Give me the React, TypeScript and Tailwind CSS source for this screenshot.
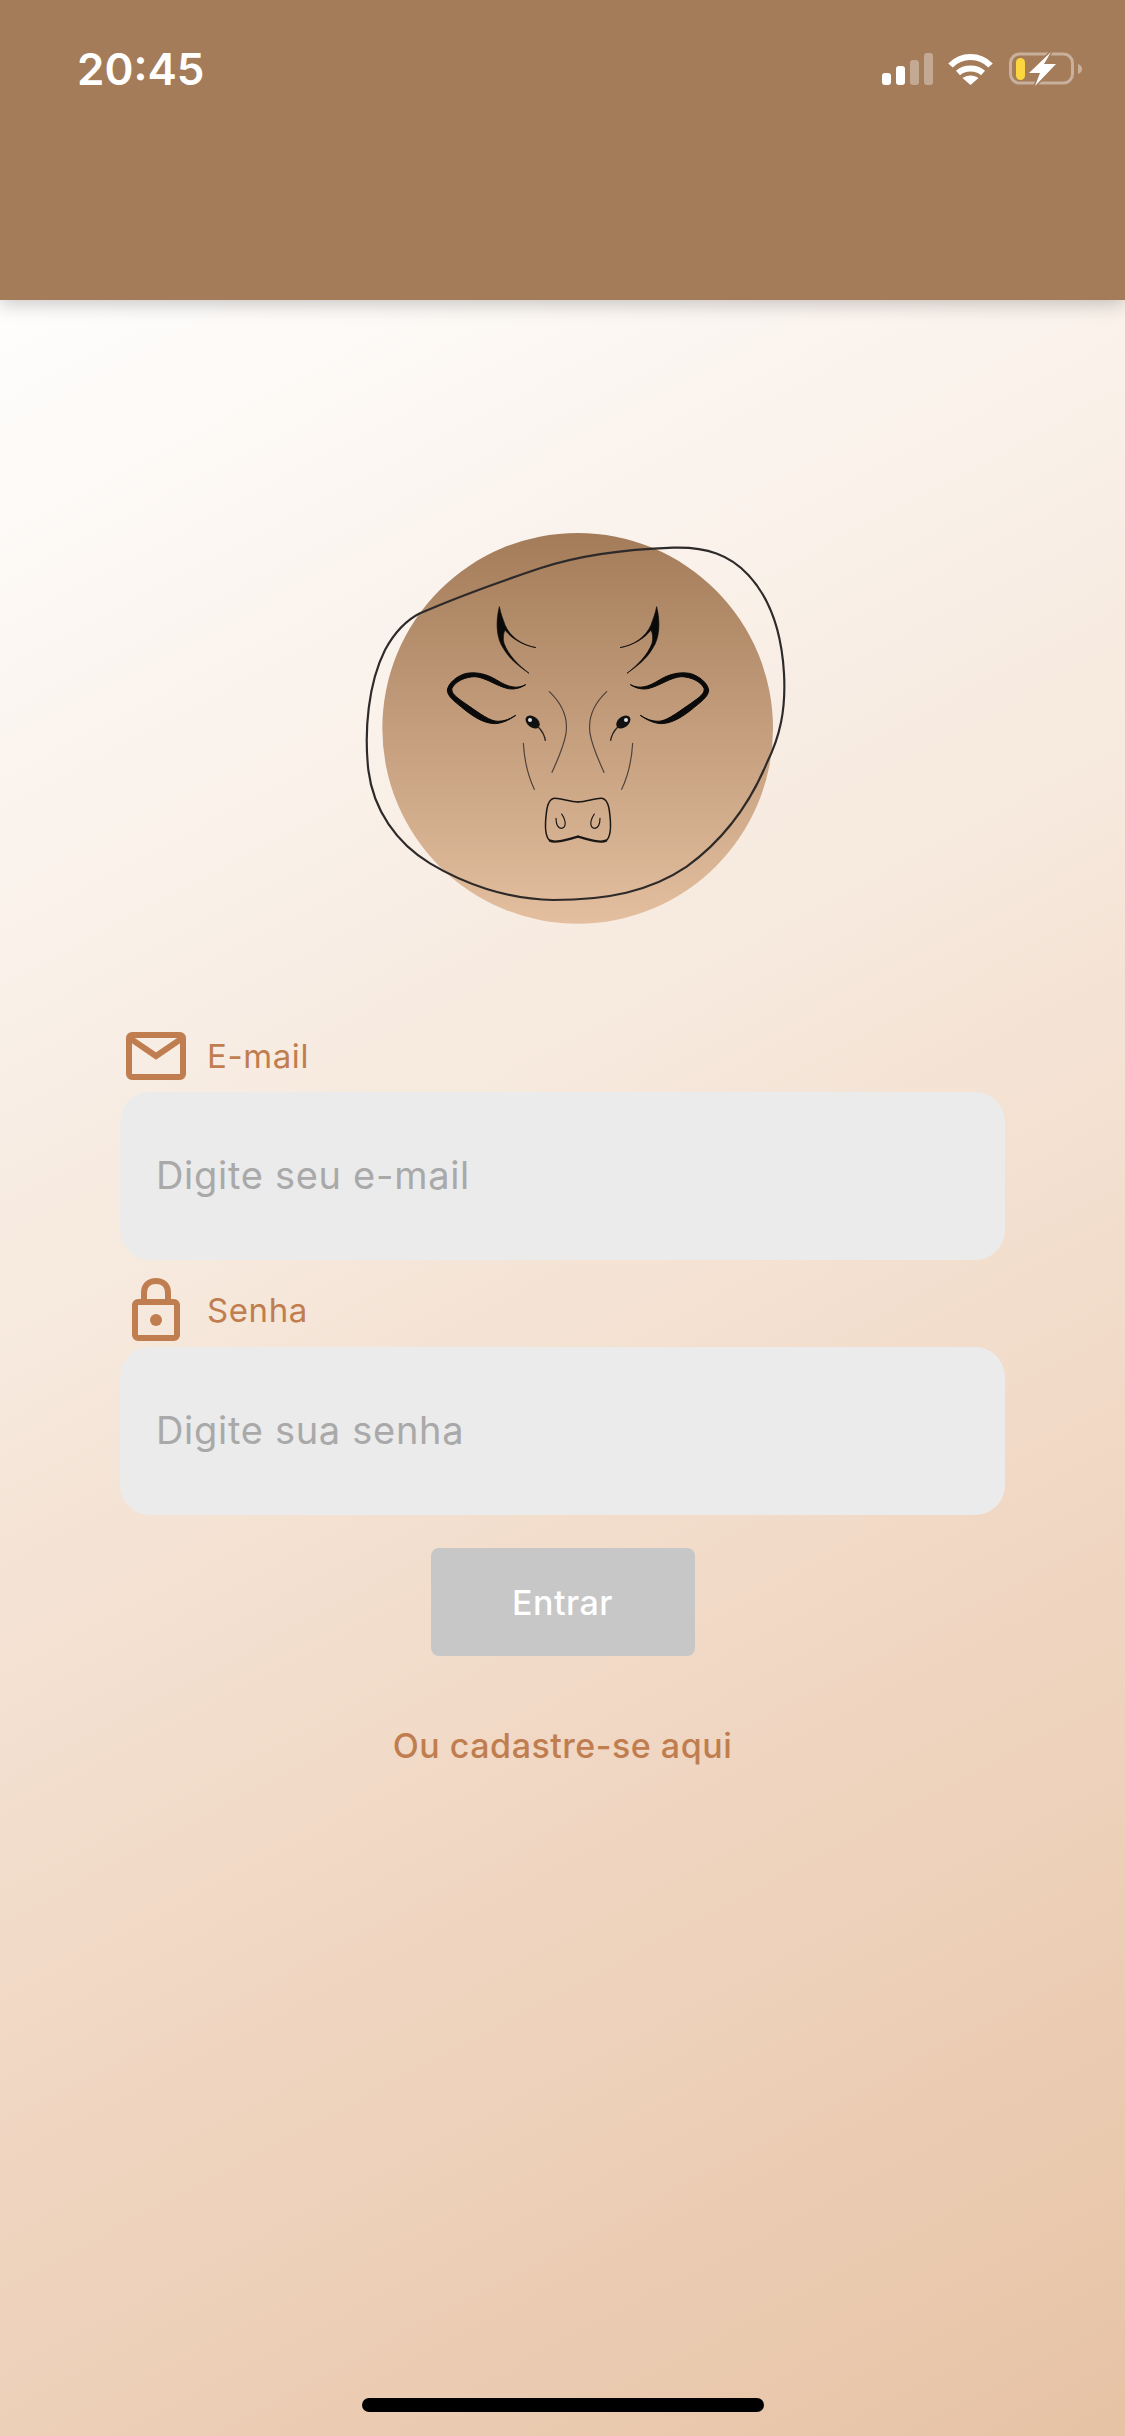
const inter = { fontFamily: 'Inter, "Noto Sans", sans-serif' };

const CowHalf = () => (
  <g>
    {/* horn */}
    <path
      fill="#0a0a0a"
      stroke="#0a0a0a"
      strokeWidth="2"
      strokeLinejoin="round"
      d="M478 290C466 340 470 385 490 415C510 450 540 470 567 490C535 465 505 435 492 400C488 385 490 370 495 360C515 385 545 405 588 413C545 405 510 380 495 345C488 325 482 310 478 290Z"
    />
    {/* ear */}
    <path
      fill="#0a0a0a"
      stroke="#0a0a0a"
      strokeWidth="3"
      strokeLinejoin="round"
      d="M557 524C530 538 505 532 470 510C440 492 410 485 380 490C350 497 325 520 322 540C322 560 345 575 375 600C410 628 445 645 475 640C495 636 510 628 527 616C505 630 485 636 465 633C440 628 405 600 375 580C350 562 332 550 336 535C345 515 375 500 405 500C435 502 465 525 500 535C520 540 540 535 557 524Z"
    />
    {/* eye */}
    <ellipse cx="578" cy="636" rx="24" ry="16" transform="rotate(38 578 636)" fill="#111" />
    <circle cx="570" cy="630" r="6" fill="#ddd" />
    <path d="M594 650C608 664 614 678 616 691" fill="none" stroke="#2a2420" strokeWidth="4" strokeLinecap="round" />
    {/* face lines */}
    <g fill="none" stroke="#4d4038" strokeWidth="3.5" strokeLinecap="round">
      <path d="M628 545C665 580 685 620 678 670C670 715 650 755 636 787" />
      <path d="M550 700C553 750 565 800 583 838" />
    </g>
    {/* muzzle */}
    <g fill="none" stroke="#1a1614" strokeLinecap="round">
      <path strokeWidth="4.5" d="M714 876C690 876 665 865 645 865C630 865 622 880 619 910C614 950 614 980 630 992" />
      <path strokeWidth="7" d="M630 992C650 1002 690 985 714 980" />
      <path strokeWidth="3.5" d="M648 925C648 945 655 955 665 955C678 952 680 935 665 912" />
    </g>
  </g>
);

const Logo = () => (
  <svg width="460" height="430" viewBox="0 0 1380 1290" className="ml-[340px] block">
    <defs>
      <linearGradient id="disc" x1="0" y1="0" x2="0" y2="1">
        <stop offset="0" stopColor="#a47c5a" />
        <stop offset="1" stopColor="#e3bf9f" />
      </linearGradient>
    </defs>
    <circle cx="713" cy="655" r="586" fill="url(#disc)" />
    <CowHalf />
    <g transform="matrix(-1 0 0 1 1428 0)">
      <CowHalf />
    </g>
    <path
      fill="none"
      stroke="#2e2a2a"
      strokeWidth="6.5"
      d="M240 310C320 275 480 215 600 175C720 135 850 118 1000 113C1100 110 1170 135 1225 195C1290 265 1325 370 1332 490C1338 600 1320 680 1280 760C1230 880 1150 990 1040 1070C930 1145 800 1170 640 1170C500 1168 370 1120 270 1060C170 1000 100 900 85 780C72 660 85 520 135 420C165 365 200 330 240 310Z"
    />
  </svg>
);

const StatusIcons = () => (
  <div className="flex items-center">
    <svg width="51" height="32" viewBox="0 0 51 32" fill="#fff">
      <rect x="0" y="20" width="9" height="12" rx="3" />
      <rect x="14" y="13" width="9" height="19" rx="3" />
      <rect x="28" y="7" width="9" height="25" rx="3" opacity="0.35" />
      <rect x="42" y="0" width="9" height="32" rx="3" opacity="0.35" />
    </svg>
    <svg width="45" height="32" viewBox="0 0 45 32" className="ml-[15px]">
      <g fill="none" stroke="#fff" strokeWidth="6">
        <path d="M2.5 12.5C13 1 32 1 42.5 12.5" />
        <path d="M10 20C16.500 14 28.500 14 35 20" />
      </g>
      <path d="M14.500 25C19 21.500 26 21.500 30.500 25L22.500 32Z" fill="#fff" />
    </svg>
    <svg width="73" height="34" viewBox="0 0 73 34" className="ml-[16px]">
      <rect x="1.500" y="2" width="62" height="29" rx="9" fill="none" stroke="#fff" strokeOpacity="0.4" strokeWidth="3" />
      <path d="M69 12C72 13 73 15 73 17C73 19 72 21 69 22Z" fill="#fff" fillOpacity="0.4" />
      <rect x="7" y="6" width="9" height="22" rx="4.500" fill="#fbd63f" />
      <path d="M42 0L20 21H31L26 34L47 12H35Z" fill="#fff" stroke="#a47c5a" strokeWidth="3" paintOrder="stroke" />
    </svg>
  </div>
);

const MailIcon = () => (
  <svg width="60" height="48" viewBox="0 0 60 48" fill="none" stroke="#c07e50" strokeWidth="6">
    <rect x="3" y="3" width="54" height="42" rx="3" />
    <path d="M5 7L30 24L55 7" />
  </svg>
);

const LockIcon = () => (
  <svg width="48" height="63" viewBox="0 0 48 63" fill="none" stroke="#c07e50" strokeWidth="6">
    <rect x="3" y="24" width="42" height="36" rx="3" />
    <path d="M12 24V15C12 7 17 3 24 3C31 3 36 7 36 15V24" />
    <circle cx="24" cy="42" r="6" fill="#c07e50" stroke="none" />
  </svg>
);

const Field = ({ text }: { text: string }) => (
  <div className="flex h-[168px] items-center rounded-[30px] bg-[#ebebeb] pb-[2px] pl-[36px] text-[38px] tracking-[0.7px] text-[#a9a9a9]">
    {text}
  </div>
);

export default function App() {
  return (
    <div
      className="flex min-h-[2436px] w-[1125px] flex-col bg-[linear-gradient(152deg,#ffffff_8%,#f6e8dc_46%,#f1d9c6_66%,#e7c3a5_100%)]"
      style={inter}
    >
      <header className="relative h-[300px] shrink-0 bg-[#a47c5a] pl-[77px] pr-[43px] pt-[52px] shadow-[0_4px_18px_rgba(0,0,0,0.22)]">
        <div className="flex h-[34px] items-center justify-between text-white">
          <span className="text-[44px] font-semibold leading-none">20:45</span>
          <StatusIcons />
        </div>
      </header>

      <main className="flex flex-col">
        <div className="mt-[210px]">
          <Logo />
        </div>

        <form className="mx-[120px] mt-[92px] flex flex-col">
          <div className="mb-[12px] flex h-[48px] items-center text-[33px] tracking-[0.6px] text-[#c07e50]">
            <span className="flex w-[72px] justify-center">
              <MailIcon />
            </span>
            <span className="ml-[15px] pt-[2px]">E-mail</span>
          </div>
          <Field text="Digite seu e-mail" />

          <div className="mb-[6px] mt-[18px] flex h-[63px] items-center text-[33px] tracking-[0.6px] text-[#c07e50]">
            <span className="flex w-[72px] justify-center">
              <LockIcon />
            </span>
            <span className="ml-[15px] pt-[3px]">Senha</span>
          </div>
          <Field text="Digite sua senha" />

          <button
            type="button"
            className="mx-auto mt-[33px] flex h-[108px] w-[264px] items-center justify-center rounded-[8px] bg-[#c7c7c7] text-[34px] font-medium tracking-[0.5px] text-white"
          >
            Entrar
          </button>
          <a className="mt-[70px] text-center text-[34px] font-medium leading-[40px] tracking-[0.5px] text-[#c07e50]">
            Ou cadastre-se aqui
          </a>
        </form>
      </main>

      <div className="mt-auto flex justify-center pb-[24px]">
        <div className="h-[14px] w-[402px] rounded-full bg-black" />
      </div>
    </div>
  );
}
